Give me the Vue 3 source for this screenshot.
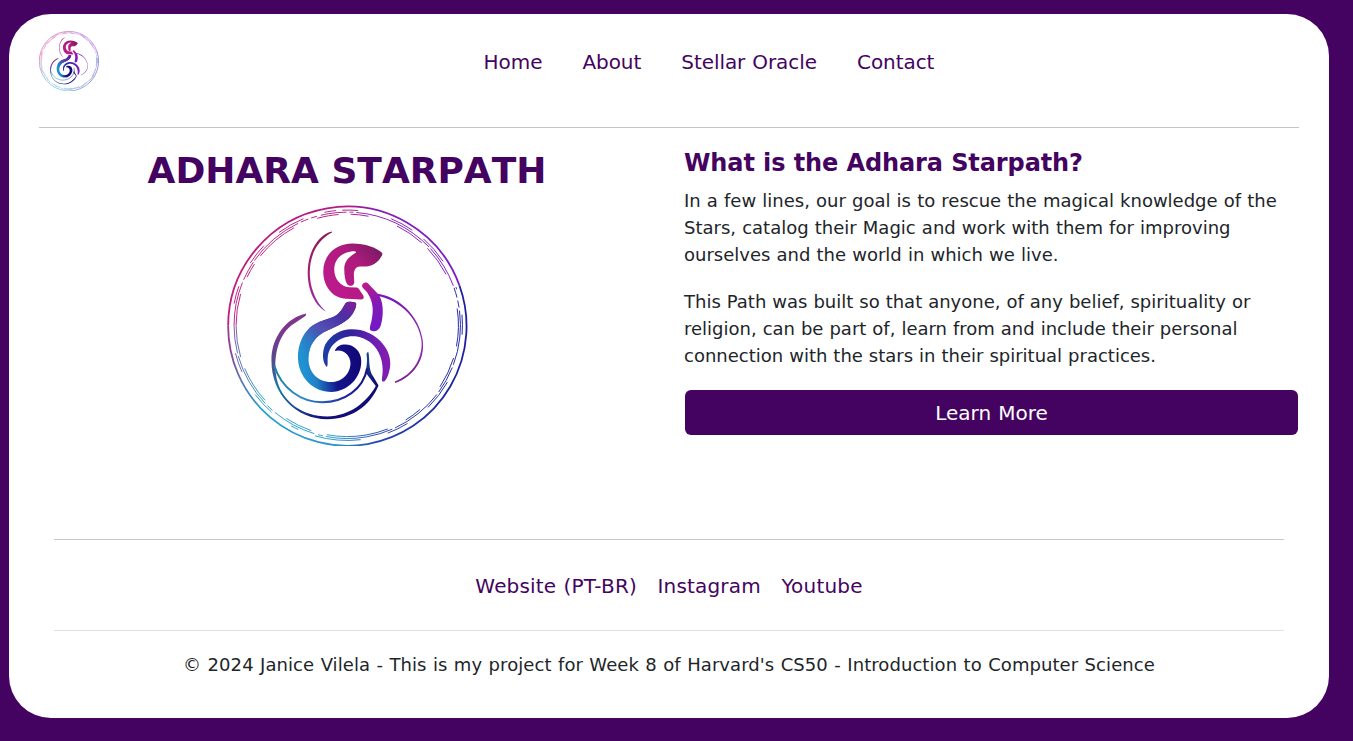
<script setup>
const nav = ['Home', 'About', 'Stellar Oracle', 'Contact']
const links = ['Website (PT-BR)', 'Instagram', 'Youtube']
</script>

<template>
  <div class="page">
    <svg class="defs" aria-hidden="true">
      <defs>
        <linearGradient id="ringTop" gradientUnits="userSpaceOnUse" x1="227" y1="0" x2="467" y2="0">
          <stop offset="0" stop-color="#c01c80" />
          <stop offset="0.5" stop-color="#b01c86" />
          <stop offset="0.62" stop-color="#8a1cb8" />
          <stop offset="1" stop-color="#7a18c4" />
        </linearGradient>
        <linearGradient id="ringLow" gradientUnits="userSpaceOnUse" x1="227" y1="0" x2="467" y2="0">
          <stop offset="0" stop-color="#9d3590" />
          <stop offset="0.05" stop-color="#5f6cb0" />
          <stop offset="0.14" stop-color="#22a0cc" />
          <stop offset="0.45" stop-color="#2898cc" />
          <stop offset="0.62" stop-color="#2448aa" />
          <stop offset="1" stop-color="#1c1ca0" />
        </linearGradient>
        <linearGradient id="head" gradientUnits="userSpaceOnUse" x1="334" y1="288" x2="378" y2="250">
          <stop offset="0" stop-color="#bb1a8b" />
          <stop offset="0.6" stop-color="#ad1b7c" />
          <stop offset="1" stop-color="#7c1a66" />
        </linearGradient>
        <linearGradient id="neck" gradientUnits="userSpaceOnUse" x1="362" y1="284" x2="380" y2="322">
          <stop offset="0" stop-color="#c01a88" />
          <stop offset="0.55" stop-color="#8519b5" />
          <stop offset="1" stop-color="#7519c2" />
        </linearGradient>
        <linearGradient id="body" gradientUnits="userSpaceOnUse" x1="303" y1="368" x2="358" y2="360">
          <stop offset="0" stop-color="#2092d2" />
          <stop offset="0.2" stop-color="#2080c6" />
          <stop offset="0.56" stop-color="#15148c" />
          <stop offset="1" stop-color="#120878" />
        </linearGradient>
        <linearGradient id="bodyTop" gradientUnits="userSpaceOnUse" x1="352" y1="303" x2="312" y2="362">
          <stop offset="0" stop-color="#7d1f98" />
          <stop offset="0.25" stop-color="#4a30a6" />
          <stop offset="0.55" stop-color="#5450b4" />
          <stop offset="1" stop-color="#2c8ccc" stop-opacity="0" />
        </linearGradient>
        <linearGradient id="arch" gradientUnits="userSpaceOnUse" x1="325" y1="360" x2="388" y2="360">
          <stop offset="0" stop-color="#1d3da4" />
          <stop offset="0.4" stop-color="#33209c" />
          <stop offset="0.8" stop-color="#7020b4" />
          <stop offset="1" stop-color="#841cb0" />
        </linearGradient>
        <linearGradient id="tail" gradientUnits="userSpaceOnUse" x1="286" y1="320" x2="346" y2="404">
          <stop offset="0" stop-color="#8c2f8c" />
          <stop offset="0.25" stop-color="#544b8e" />
          <stop offset="0.5" stop-color="#147ba6" />
          <stop offset="0.75" stop-color="#1a4390" />
          <stop offset="1" stop-color="#120d78" />
        </linearGradient>
        <linearGradient id="innerTail" gradientUnits="userSpaceOnUse" x1="272" y1="0" x2="368" y2="0">
          <stop offset="0" stop-color="#247f9d" />
          <stop offset="0.3" stop-color="#2a8fca" />
          <stop offset="0.75" stop-color="#2028a0" />
          <stop offset="1" stop-color="#150f78" />
        </linearGradient>
        <linearGradient id="wisp" gradientUnits="userSpaceOnUse" x1="0" y1="232" x2="0" y2="312">
          <stop offset="0" stop-color="#861a58" />
          <stop offset="0.55" stop-color="#aa1c74" />
          <stop offset="1" stop-color="#8b3bb0" />
        </linearGradient>
        <linearGradient id="veil" gradientUnits="userSpaceOnUse" x1="0" y1="295" x2="0" y2="384">
          <stop offset="0" stop-color="#7419bd" />
          <stop offset="0.55" stop-color="#8d2cb0" />
          <stop offset="1" stop-color="#782094" />
        </linearGradient>
      </defs>
      <symbol id="serpent" viewBox="227 205.5 240.5 241">
        <g fill="none" stroke-width="1.8">
          <path stroke="url(#ringTop)" d="M227.9 326A119.2 119.6 0 0 1 459.2 286" />
          <path stroke="url(#ringLow)" d="M227.9 326A119.2 119.6 0 1 0 459.2 286" />
        </g>
        <g fill="none" stroke-width="0.95">
          <path stroke="url(#ringTop)" stroke-dasharray="44 3 20 2 58 3 8 3 6 4 26 3 4 3 82 2" d="M233.8 326A113.2 113.2 0 0 1 453.8 288.3" />
          <path stroke="url(#ringTop)" stroke-dasharray="32 18 15 10 44 25 22 12 18 30 30 8" d="M235.8 326A111.2 111.2 0 0 1 451.9 289" />
          <path stroke="url(#ringTop)" stroke-dasharray="0 22 18 26 22 20 28 22 12 6 16 34 24 14 30 20" d="M231.8 326A115.2 115.2 0 0 1 455.7 287.6" />
          <path stroke="url(#ringLow)" stroke-dasharray="28 3 55 3 7 3 45 4 5 3 68 3 54 3" d="M233.8 326A113.2 113.2 0 1 0 453.8 288.3" />
          <path stroke="url(#ringLow)" stroke-dasharray="32 12 38 28 28 16 62 20 18 30" d="M235.8 326A111.2 111.2 0 1 0 451.9 289" />
          <path stroke="url(#ringLow)" stroke-dasharray="0 28 20 26 24 24 8 18 46 28 22 26 32 22" d="M231.8 326A115.2 115.2 0 1 0 455.7 287.6" />
        </g>
        <path fill="url(#wisp)" d="M331.7 232C322 234 315 243 311 253C305 269 307 288 314 300C317 306 322 310 325.7 312C319 306 314 297 311.5 288C306 267 312 243 331.7 233Z" />
        <path fill="url(#head)" d="M382 253.5C376 248 365 244 352 244C335 244 323 256 323 272C323 286 332 299 346 299.3L361 300C363.5 300 364 298 363 296L359 290C358 288.3 357 288 355 288L349 287.8C340 287 334 279 334 270C334 260 341 253.5 350 252.2C353 251.6 356 251.8 355.8 253C349 257 344 262 344 269C344 276 345 281 346.5 284C348.5 287.5 353.5 287 354 283C354 277 352 271 357 267.5C362 266 368 268.5 374 264.5C378 262 380 259 382 255.5Z" />
        <path fill="url(#neck)" d="M361.8 286C362.5 283 366 282 368.2 284.3C371 288 376 292 379 296C384 305 383 318 380.5 326C379 331 374.5 333 370.5 331C368.5 329.5 370.5 325 371.3 321C373.5 311 373 302 367 293C365 290 361.5 288.5 361.8 286Z" />
        <path fill="url(#veil)" d="M377.5 294.3C397 297 419 315 422.5 341C425 361 413 377 395 383.5L394.5 382C411 376 423 360 421.2 341C418 318 399 301 378 296.5Z" />
        <path fill="url(#body)" d="M355.5 303.2C352 302 348 301.5 345.5 303.5C342 309 340 314 334 317C324 321 314 322.5 307 331C300 339 297.7 349 297.7 358C298 378 313 392.5 331 392.5C348 392 361 378 361 362C361 351 353 345 345 345C340 345 336.5 346.5 334.5 351.5C343 349 350.2 356 350.2 363.5C350.2 375 341 382.5 331 382.5C317 382.5 308 372 308.3 359C308.5 345 316 336 327 331C336 327 348 322 352.5 314C354.5 311 357 305 355.5 303.2Z" />
        <path fill="url(#bodyTop)" d="M355.5 303.2C352 302 348 301.5 345.5 303.5C342 309 340 314 334 317C324 321 314 322.5 307 331C300 339 297.7 349 297.7 358L308.3 359C308.5 345 316 336 327 331C336 327 348 322 352.5 314C354.5 311 357 305 355.5 303.2Z" />
        <path fill="url(#arch)" d="M326.5 367.5C322 363 321.5 353 325 345C331 335 341 329.5 352 329.8C374 330 391 348 390 365C389.5 373 387 379 384.5 381.5C383.5 382.5 381 382.5 381.7 379C385 362 378 340 355 336.8C340 335.5 328 346 327.5 358C327 361 328 366 326.5 367.5Z" />
        <path fill="url(#tail)" d="M305.8 314C287 318 271 337 271.2 361C271 395 296 419.5 327 419.8C352 419.5 370 406 378.3 386L373 377C368 371 369.5 359 368.3 353C366.5 352 366 354 366.5 357C367.5 365 365 370 366 374L375.5 386.5C367 402 350 416.5 327 417C302 417 283 402 277.5 383C272 363 276 338 291 326L305.5 316.2Z" />
        <path fill="none" stroke="url(#innerTail)" stroke-width="2" d="M274 366C281 389 301 402.7 322 402.8C344 402.5 363 390 366.8 369" />
      </symbol>
    </svg>

    <div class="card">
      <header class="top">
        <svg class="brand"><use href="#serpent" /></svg>
        <nav class="nav">
          <a v-for="n in nav" :key="n">{{ n }}</a>
        </nav>
      </header>
      <main class="main">
        <section class="hero">
          <h1>ADHARA STARPATH</h1>
          <svg class="logo"><use href="#serpent" /></svg>
        </section>
        <section class="about">
          <h2>What is the Adhara Starpath?</h2>
          <p class="goal">In a few lines, our goal is to rescue the magical knowledge of the<br />Stars, catalog their Magic and work with them for improving<br />ourselves and the world in which we live.</p>
          <p class="path">This Path was built so that anyone, of any belief, spirituality or<br />religion, can be part of, learn from and include their personal<br />connection with the stars in their spiritual practices.</p>
          <button class="more">Learn More</button>
        </section>
      </main>
      <footer class="foot">
        <div class="links">
          <a v-for="l in links" :key="l">{{ l }}</a>
        </div>
        <div class="copy">© 2024 Janice Vilela - This is my project for Week 8 of Harvard's CS50 - Introduction to Computer Science</div>
      </footer>
    </div>
  </div>
</template>

<style>
body { margin: 0; background: #440361; }
</style>

<style scoped>
.page {
  height: 741px;
  box-sizing: border-box;
  padding: 14px 24px 23px 9px;
  background: #440361;
  font-family: Verdana, "DejaVu Sans", sans-serif;
  font-size: 18px;
  line-height: 27px;
  color: #212529;
  overflow: hidden;
}
.defs { position: absolute; width: 0; height: 0; }
.card {
  height: 704px;
  box-sizing: border-box;
  padding: 0 30px;
  background: #fff;
  border-radius: 42px;
  display: flex;
  flex-direction: column;
}
.top {
  height: 114px;
  box-sizing: border-box;
  border-bottom: 1px solid #c4c4c6;
  padding-top: 17px;
  display: flex;
  align-items: flex-start;
}
.brand { width: 60px; height: 60px; flex: none; }
.nav {
  flex: 1;
  display: flex;
  justify-content: center;
  gap: 40px;
  padding: 16px 0 0 20px;
  font-size: 20px;
  line-height: 30px;
  letter-spacing: -0.06px;
  word-spacing: 0.7px;
  color: #440361;
}
.main { display: flex; height: 411px; }
.hero {
  width: 616px;
  display: flex;
  flex-direction: column;
  align-items: center;
}
h1 {
  margin: 21px 0 12px;
  font-size: 36px;
  line-height: 44px;
  font-weight: 700;
  font-kerning: none;
  color: #440361;
  white-space: nowrap;
}
.logo { width: 241px; height: 241px; margin-left: 1px; }
.about { flex: 1; padding-left: 29px; white-space: nowrap; }
h2 {
  margin: 21px 0 9px;
  font-size: 24px;
  line-height: 29px;
  font-weight: 700;
  letter-spacing: -0.1px;
  color: #440361;
}
p { margin: 0 0 20px; }
.goal { word-spacing: 0.42px; }
.path { margin-bottom: 21px; word-spacing: 0.26px; }
.more {
  display: block;
  width: 613px;
  height: 45px;
  margin-left: 1px;
  border: 0;
  border-radius: 6px;
  background: #440361;
  color: #fff;
  font-family: inherit;
  font-size: 20px;
  word-spacing: 0.7px;
}
.foot {
  margin: 0 15px;
  border-top: 1px solid #c8c8ca;
  text-align: center;
}
.links {
  height: 88px;
  padding-top: 2px;
  border-bottom: 1px solid #dee2e6;
  display: flex;
  align-items: center;
  justify-content: center;
  gap: 20.5px;
  font-size: 20px;
  letter-spacing: 0.18px;
  word-spacing: 0.7px;
  color: #440361;
}
.copy { padding-top: 20px; white-space: nowrap; letter-spacing: 0.07px; word-spacing: 0.62px; }
</style>
